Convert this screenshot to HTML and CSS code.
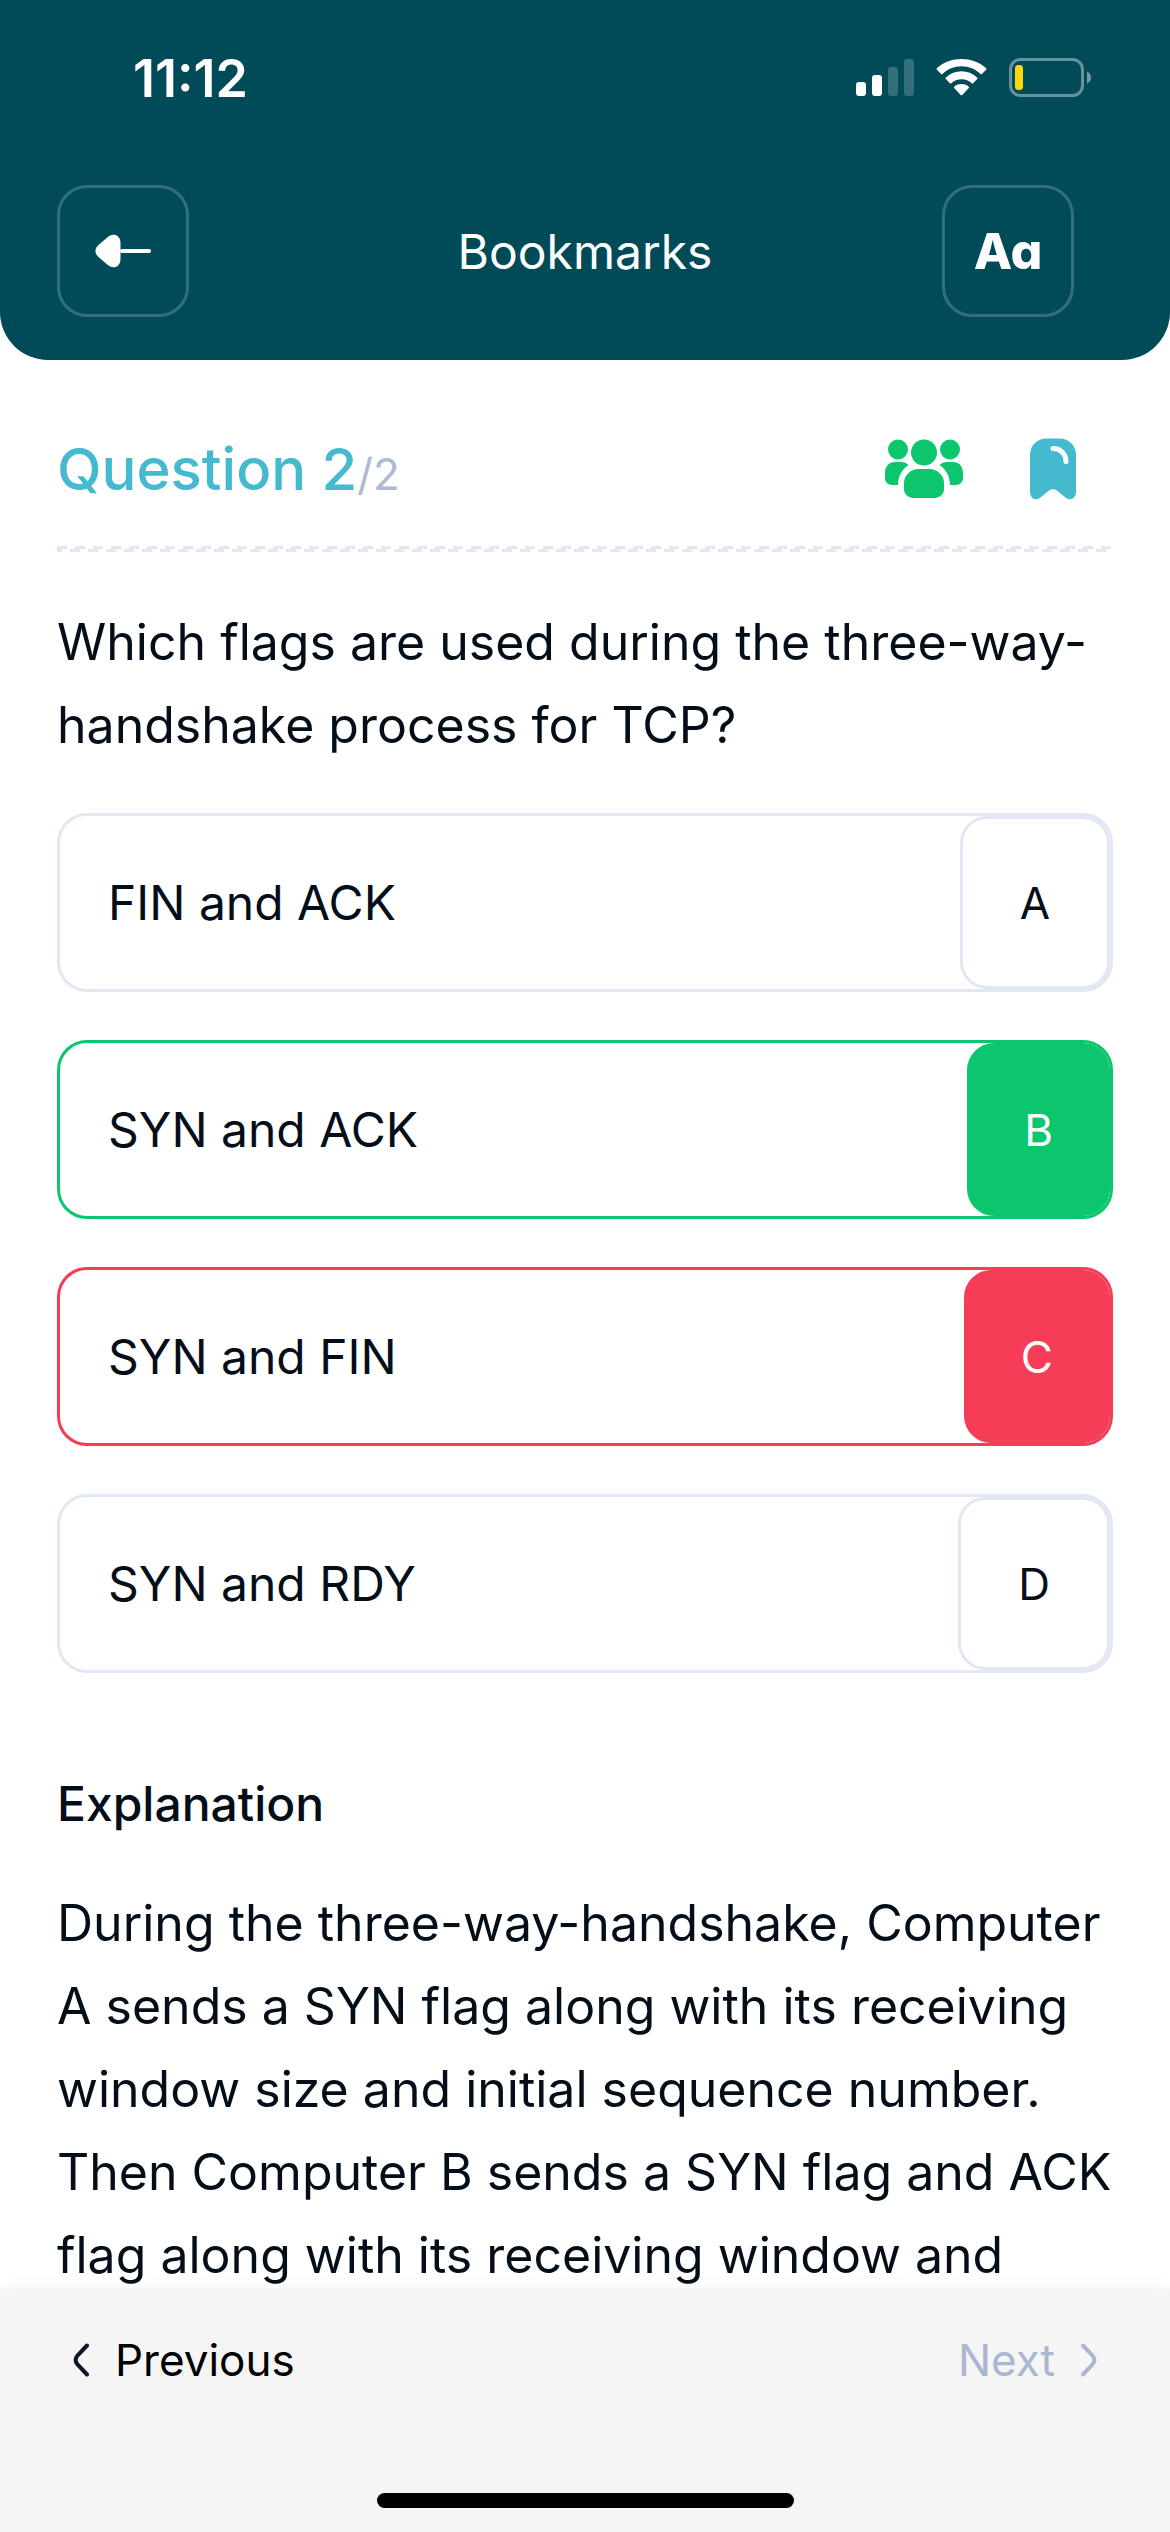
FILE: index.html
```html
<!DOCTYPE html>
<html lang="en">
<head>
<meta charset="utf-8">
<meta name="viewport" content="width=device-width, initial-scale=1">
<title>Bookmarks</title>
<link rel="stylesheet" href="styles.css">
</head>
<body>
<header class="header">
  <div class="status">
    <span class="status-time">11:12</span>
    <div class="status-icons">
      <svg width="58" height="40" viewBox="0 0 58 40" fill="#fff" aria-hidden="true">
        <rect x="0" y="24" width="10" height="14" rx="3"/>
        <rect x="16" y="17" width="10" height="21" rx="3"/>
        <rect x="32" y="9" width="10" height="29" rx="3" opacity=".2"/>
        <rect x="48" y="1" width="10" height="37" rx="3" opacity=".2"/>
      </svg>
      <svg width="51" height="40" viewBox="0 0 51 40" fill="#fff" aria-hidden="true">
        <path d="M25.500 8.300C32.800 8.300 39.500 11.100 44.500 15.900C44.900 16.300 45.500 16.300 45.900 15.900L49.900 11.900C50.600 11.300 50.600 10.700 50 10.100C36.500-2 14.500-2 1 10.100C.4 10.700.4 11.300 1.100 11.900L5.100 15.900C5.500 16.300 6.100 16.300 6.500 15.900C11.500 11.100 18.200 8.300 25.500 8.300Z"/>
        <path d="M25.500 21.200C29.400 21.200 33 22.700 35.700 25.200C36.100 25.600 36.700 25.600 37.100 25.200L41.200 21.100C41.700 20.500 41.700 19.900 41.100 19.400C32.300 11.300 18.700 11.300 9.900 19.400C9.300 19.900 9.300 20.500 9.800 21.100L13.900 25.200C14.300 25.600 14.900 25.600 15.300 25.200C18 22.700 21.600 21.200 25.500 21.200Z"/>
        <path d="M32.600 30.200C33.200 29.600 33.200 28.900 32.500 28.400C28.500 25.200 22.500 25.200 18.500 28.400C17.800 28.900 17.800 29.600 18.400 30.200L24.700 36.900C25.200 37.500 25.800 37.500 26.300 36.900Z"/>
      </svg>
      <svg width="83" height="40" viewBox="0 0 83 40" aria-hidden="true">
        <rect x="1.500" y="1.500" width="72" height="36" rx="10" fill="none" stroke="#fff" stroke-width="3" opacity=".4"/>
        <path d="M78 13.500C80.400 14.500 82 16.900 82 19.500S80.400 24.500 78 25.500Z" fill="#fff" opacity=".45"/>
        <rect x="6" y="7" width="8" height="25" rx="3.500" fill="#ffd60a"/>
      </svg>
    </div>
  </div>
  <div class="toolbar">
    <button class="tool" type="button" aria-label="Back">
      <svg width="56" height="36" viewBox="0 0 56 36" aria-hidden="true">
        <path d="M27 18H54" stroke="#fff" stroke-width="4" stroke-linecap="round"/>
        <path d="M12.500 4.200C17-.2 25.500 1 25.500 10V26C25.500 35 17 36.200 12.500 31.800L3.500 24C-.6 20.500-.6 15.500 3.500 12Z" fill="#fff"/>
      </svg>
    </button>
    <h1 class="title">Bookmarks</h1>
    <button class="tool tool-text" type="button" aria-label="Text size">Aa</button>
  </div>
</header>

<main class="content">
  <div class="question-bar">
    <h2 class="counter">Question 2<span class="counter-total">/2</span></h2>
    <div class="question-actions">
      <button class="plain" type="button" aria-label="Community answers">
        <svg width="78" height="60" viewBox="0 0 78 60" fill="#0bc66c" aria-hidden="true">
          <circle cx="13" cy="10.500" r="10"/>
          <circle cx="65" cy="10.500" r="10"/>
          <circle cx="39" cy="13.500" r="13"/>
          <path d="M10 23H16C19 23 21.500 24 23.500 26C17 30.500 13 37.500 13 46H7C3 46 0 43 0 39V34C0 27.500 4 23 10 23Z"/>
          <path d="M68 23H62C59 23 56.500 24 54.500 26C61 30.500 65 37.500 65 46H71C75 46 78 43 78 39V34C78 27.500 74 23 68 23Z"/>
          <path d="M34 30H44C53 30 59 37 59 44V50C59 55.500 54.500 59 49.500 59H28.500C23.500 59 19 55.500 19 50V44C19 37 25 30 34 30Z"/>
        </svg>
      </button>
      <button class="plain" type="button" aria-label="Bookmark">
        <svg width="48" height="62" viewBox="0 0 48 62" aria-hidden="true">
          <path d="M1 17C1 7.500 8 .5 17.500 .5H30.500C40 .5 47 7.500 47 17V54C47 60.500 41 63.500 36.500 59.500L28.500 53C25.500 50.500 22.500 50.500 19.500 53L11.500 59.500C7 63.500 1 60.500 1 54Z" fill="#45bace"/>
          <path d="M24 10.500C31.500 10.500 37 16 37 23.500" fill="none" stroke="#fff" stroke-width="5" stroke-linecap="round"/>
        </svg>
      </button>
    </div>
  </div>
  <div class="divider"></div>

  <p class="body-text question">Which flags are used during the three-way-handshake process for TCP?</p>

  <div class="options">
    <button class="option" type="button"><span class="option-label">FIN and ACK</span><span class="option-key">A</span></button>
    <button class="option option-right" type="button"><span class="option-label">SYN and ACK</span><span class="option-key">B</span></button>
    <button class="option option-wrong" type="button"><span class="option-label">SYN and FIN</span><span class="option-key">C</span></button>
    <button class="option" type="button"><span class="option-label">SYN and RDY</span><span class="option-key">D</span></button>
  </div>

  <h3 class="subhead">Explanation</h3>
  <p class="body-text">During the three-way-handshake, Computer A sends a SYN flag along with its receiving window size and initial sequence number. Then Computer B sends a SYN flag and ACK flag along with its receiving window and</p>
</main>

<footer class="footer">
  <nav class="pager">
    <button class="plain pager-button" type="button">
      <svg width="16" height="34" viewBox="0 0 16 34" fill="none" stroke="#0d1626" stroke-width="4" stroke-linecap="round" aria-hidden="true"><path d="M14 2.500L4.500 12.500C2 15.500 2 18.500 4.500 21.500L14 31.500"/></svg>
      Previous
    </button>
    <button class="plain pager-button pager-off" type="button" disabled>
      Next
      <svg width="16" height="34" viewBox="0 0 16 34" fill="none" stroke="#a9b8d0" stroke-width="4" stroke-linecap="round" aria-hidden="true"><path d="M2 2.500L11.500 12.500C14 15.500 14 18.500 11.500 21.500L2 31.500"/></svg>
    </button>
  </nav>
  <div class="home-indicator"></div>
</footer>
</body>
</html>
```
FILE: styles.css
```css
* {
  box-sizing: border-box;
}

body {
  margin: 0;
  height: 100vh;
  display: flex;
  flex-direction: column;
  background: #fff;
  color: #040e19;
  font-family: Inter, "Liberation Sans", sans-serif;
}

h1, h2, h3, p {
  margin: 0;
  font-weight: 500;
}

button {
  margin: 0;
  padding: 0;
  font: inherit;
  color: inherit;
}

svg {
  display: block;
}

.header {
  flex: none;
  padding: 48px 57px 43px;
  background: #014b59;
  color: #fff;
  border-radius: 0 0 48px 48px;
}

.status {
  display: flex;
  justify-content: space-between;
  align-items: center;
  height: 60px;
  padding: 0 21px 0 76px;
}

.status-time {
  font-size: 52px;
  font-weight: 600;
}

.status-icons {
  display: flex;
  gap: 22px;
}

.toolbar {
  display: grid;
  grid-template-columns: 1fr auto 1fr;
  align-items: center;
  margin-top: 77px;
}

.title {
  font-size: 48px;
  font-weight: 400;
}

.tool {
  display: flex;
  align-items: center;
  justify-content: center;
  width: 132px;
  height: 132px;
  background: none;
  border: 3px solid rgba(255, 255, 255, 0.2);
  border-radius: 30px;
}

.tool-text {
  justify-self: end;
  margin-right: 39px;
  font-size: 50px;
  font-weight: 800;
  font-feature-settings: "cv11";
}

.plain {
  background: none;
  border: 0;
}

/* scrolls between the header and the pager */
.content {
  flex: 1;
  min-height: 0;
  overflow-y: auto;
  scrollbar-width: none;
  padding: 66px 57px 0;
}

.question-bar {
  display: flex;
  justify-content: space-between;
  align-items: center;
  height: 86px;
}

.counter {
  font-size: 58px;
  color: #45bace;
}

.counter-total {
  font-size: 44px;
  font-weight: 400;
  color: #aebad2;
}

.question-actions {
  display: flex;
  align-items: center;
  gap: 66px;
  margin-right: 36px;
}

/* two rows of dashes, half a step apart */
.divider {
  height: 6px;
  margin-top: 34px;
  background:
    repeating-linear-gradient(90deg, #e1e7f3 0 10px, transparent 10px 18px) 0 0 / 100% 3px no-repeat,
    repeating-linear-gradient(90deg, #e1e7f3 0 5px, transparent 5px 13px, #e1e7f3 13px 18px) 0 3px / 100% 3px no-repeat;
}

.body-text {
  font-size: 50px;
  font-weight: 400;
  line-height: 83px;
}

.question {
  margin-top: 49px;
}

.options {
  display: grid;
  gap: 48px;
  margin-top: 46px;
}

.option {
  display: flex;
  justify-content: space-between;
  height: 179px;
  background: #fff;
  border: 3px solid #e1e7f3;
  border-radius: 30px;
  font-size: 48px;
  text-align: left;
}

.option-label {
  align-self: center;
  padding-left: 48px;
}

.option-key {
  display: flex;
  align-items: center;
  padding: 0 57px;
  border: 3px solid #e1e7f3;
  border-radius: 27px;
  font-size: 44px;
}

.option-right {
  border-color: #0bc66c;
}

.option-wrong {
  border-color: #f63d58;
}

.option-right .option-key,
.option-wrong .option-key {
  border: 0;
  color: #fff;
}

.option-right .option-key {
  background: #0bc66c;
}

.option-wrong .option-key {
  background: #f63d58;
}

.subhead {
  margin: 101px 0 48px;
  font-size: 48px;
  line-height: 60px;
}

.footer {
  flex: none;
  position: relative;
  padding: 36px 57px 24px;
  background: #f5f5f5;
  box-shadow: 0 0 18px rgba(0, 0, 0, 0.05);
}

.pager {
  display: flex;
  justify-content: space-between;
  padding: 0 16px;
}

.pager-button {
  display: flex;
  align-items: center;
  gap: 26px;
  height: 70px;
  font-size: 44px;
  color: #000;
}

.pager-off {
  color: #a9b8d0;
}

.home-indicator {
  width: 417px;
  height: 15px;
  margin: 98px auto 0;
  background: #000;
  border-radius: 8px;
}
```
